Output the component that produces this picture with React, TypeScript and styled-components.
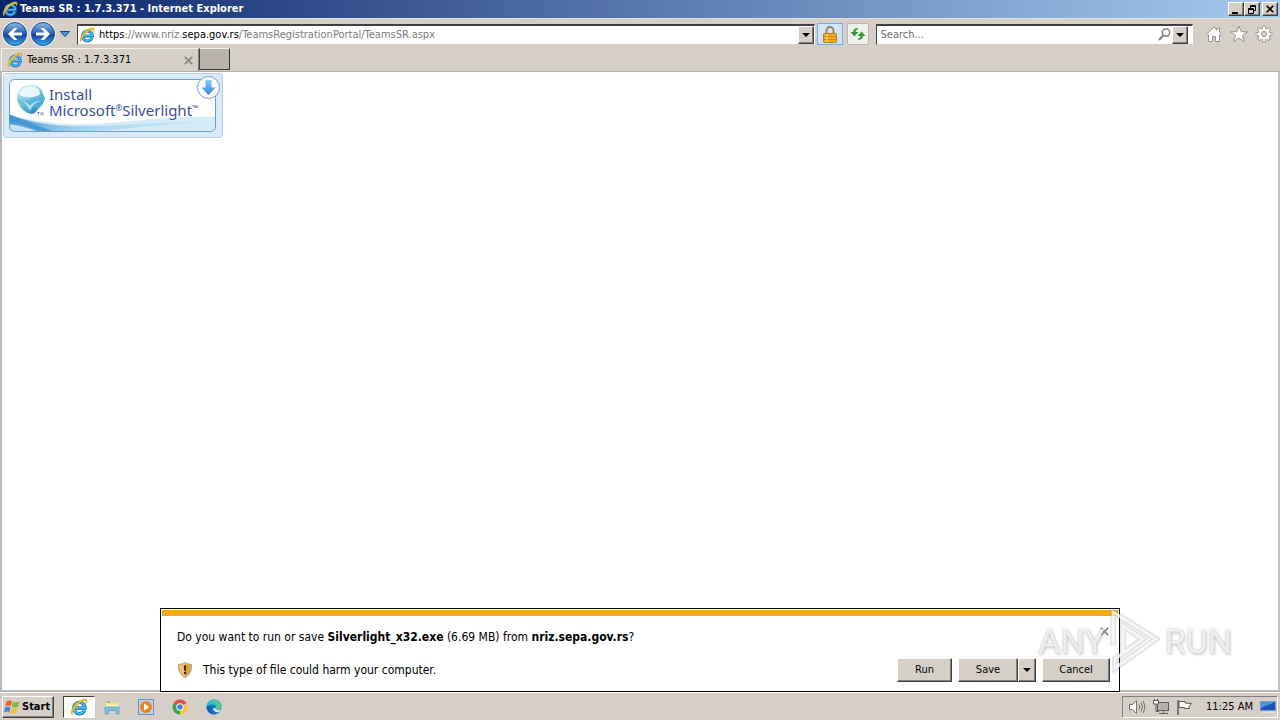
import React from "react";
import styled, { createGlobalStyle, css } from "styled-components";

const uiFont = `Tahoma, "DejaVu Sans Condensed", "DejaVu Sans", sans-serif`;
const face = "#d6cfc8";

const GlobalStyle = createGlobalStyle`
  * { box-sizing: border-box; }
  body { margin: 0; font: 11px/16px ${uiFont}; color: #000; background: ${face}; }
  button, input { font: inherit; color: inherit; }
  button { cursor: pointer; }
  svg { display: block; flex: none; }
`;

const raised = css`
  background: ${face};
  border: 1px solid;
  border-color: #fff #404040 #404040 #fff;
  box-shadow: inset -1px -1px 0 #808080;
`;

const Window = styled.div`
  position: relative;
  display: flex;
  flex-direction: column;
  min-height: 100vh;
`;

const TitleBar = styled.header`
  display: flex;
  align-items: center;
  gap: 2px;
  height: 18px;
  padding: 0 2px;
  color: #fff;
  background: linear-gradient(90deg, #0a246a, #a6caf0);
`;

const Title = styled.h1`
  flex: 1;
  margin: 0;
  font-size: 11px;
  line-height: 16px;
`;

const WindowButtons = styled.div`
  display: flex;
`;

const WindowButton = styled.button<{ $apart?: boolean }>`
  ${raised}
  display: grid;
  place-items: center;
  width: 16px;
  height: 14px;
  padding: 0;
  margin-left: ${(p) => (p.$apart ? "2px" : "0")};
`;

const NavBar = styled.nav`
  display: flex;
  align-items: center;
  height: 30px;
  padding: 1px 7px 0 1px;
  border-top: 1px solid #e4dfd8;
`;

const RoundButton = styled.button`
  display: grid;
  place-items: center;
  width: 28px;
  height: 28px;
  padding: 0;
  border: 0;
  background: none;
`;

const HistoryButton = styled(RoundButton)`
  width: 16px;
  margin-right: 4px;
`;

const Field = styled.div<{ $grow: number }>`
  display: flex;
  align-items: center;
  flex: ${(p) => p.$grow} 1 0;
  min-width: 0;
  height: 21px;
  padding-left: 1px;
  background: #fff;
  border: 1px solid;
  border-color: #404040 #fff #d6cfc8 #404040;
  border-top-width: 2px;
`;

const AddressText = styled.div`
  flex: 1;
  min-width: 0;
  margin-left: 4px;
  overflow: hidden;
  white-space: nowrap;
  color: #7b7b7b;
  outline: none;
`;

const Dark = styled.span`
  color: #000;
`;

const SearchInput = styled.input`
  flex: 1;
  min-width: 0;
  padding: 0 3px;
  border: 0;
  outline: 0;
  background: none;
  &::placeholder { color: #6d6d6d; opacity: 1; }
`;

const DropButton = styled.button`
  ${raised}
  display: grid;
  place-items: center;
  width: 16px;
  height: 18px;
  padding: 0;
`;

const SearchDrop = styled(DropButton)`
  margin-right: 4px;
`;

const LockButton = styled.button`
  display: grid;
  place-items: center;
  width: 26px;
  height: 22px;
  margin: 0 4px 0 2px;
  padding: 0;
  border: 1px solid #7eaee0;
  background: #cfe3fa;
`;

const RefreshButton = styled.button`
  display: grid;
  place-items: center;
  width: 22px;
  height: 22px;
  margin-right: 7px;
  padding: 0;
  border: 1px solid #b9b5ae;
  border-radius: 2px;
  background: #eef0ea;
`;

const Tools = styled.div`
  display: flex;
  gap: 7px;
  margin-left: 12px;
`;

const ToolButton = styled.button`
  width: 18px;
  height: 18px;
  padding: 0;
  border: 0;
  background: none;
`;

const TabRow = styled.div`
  display: flex;
  height: 23px;
  padding: 0 1px;
`;

const Tab = styled.div`
  display: flex;
  align-items: center;
  width: 198px;
  padding: 0 4px 0 5px;
  border: 1px solid #f4f1ec;
  border-bottom: 0;
  border-right: 1px solid #808080;
`;

const TabLabel = styled.span`
  flex: 1;
  margin-left: 4px;
`;

const CloseButton = styled.button`
  display: grid;
  place-items: center;
  width: 12px;
  height: 12px;
  padding: 0;
  border: 0;
  background: none;
`;

const NewTab = styled.button`
  width: 31px;
  height: 22px;
  padding: 0;
  background: #bab3ab;
  border: 1px solid;
  border-color: #f4f1ec #303030 #303030 #404040;
`;

const Page = styled.main`
  flex: 1;
  padding: 1px;
  background: #fff;
  border: 1px solid #a9a9a9;
  border-width: 1px 2px 2px 2px;
  border-color: #b1ada8 #c4c0bc #b9b9b9 #b9b6b3;
`;

const Badge = styled.a`
  position: relative;
  display: block;
  width: 220px;
  height: 65px;
  padding: 13px 0 0 46px;
  font: 15px/16px "Noto Sans", "Open Sans", sans-serif;
  color: #3a4fa0;
  text-decoration: none;
`;

const BadgeArt = styled.svg`
  position: absolute;
  inset: 0;
`;

const BadgeLine = styled.span`
  position: relative;
  display: flex;
  height: 16px;
`;

const Mark = styled.span`
  font-size: 8px;
  line-height: 12px;
`;

const Notice = styled.section`
  position: absolute;
  bottom: 28px;
  left: 12.5%;
  width: 75%;
  padding: 1px;
  background: #fff;
  border: 1px solid #000;
`;

const Stripe = styled.div`
  height: 6px;
  background: #f5ac06;
`;

const NoticeBody = styled.div`
  display: flex;
  flex-direction: column;
  gap: 9px;
  padding: 9px 8px 8px 15px;
  font-size: 12px;
`;

const NoticeRow = styled.div`
  display: flex;
  align-items: center;
  justify-content: space-between;
  min-height: 24px;
`;

const DismissButton = styled(CloseButton)`
  align-self: flex-start;
`;

const NoticeText = styled.p`
  display: flex;
  align-items: center;
  gap: 10px;
  margin: 0;
`;

const Actions = styled.div`
  display: flex;
  gap: 6px;
  font-size: 11px;
`;

const ActionButton = styled.button<{ $width: number }>`
  ${raised}
  display: grid;
  place-items: center;
  width: ${(p) => p.$width}px;
  height: 24px;
  padding: 0;
`;

const Split = styled.div`
  display: flex;
`;

const Watermark = styled.div`
  position: absolute;
  right: 48px;
  bottom: 46px;
  display: flex;
  align-items: center;
  gap: 5px;
  pointer-events: none;
  font: 34px/34px "Liberation Sans Narrow", "Roboto", sans-serif;
  color: rgba(255, 255, 255, 0.8);
  text-shadow: 0 0 2px rgba(120, 120, 120, 0.5), 1px 2px 3px rgba(120, 120, 120, 0.3);
`;

const Taskbar = styled.footer`
  display: flex;
  align-items: center;
  height: 28px;
  padding: 0 2px;
  border-top: 1px solid #fff;
`;

const StartButton = styled.button`
  ${raised}
  display: flex;
  align-items: center;
  gap: 1px;
  width: 52px;
  height: 22px;
  margin-right: 9px;
  padding: 0 1px;
  font-weight: bold;
`;

const TaskButton = styled.button<{ $active?: boolean }>`
  display: grid;
  place-items: center;
  width: ${(p) => (p.$active ? 32 : 34)}px;
  height: 22px;
  padding: 0;
  background: ${(p) => (p.$active ? "#fff" : "none")};
  border: ${(p) => (p.$active ? "1px solid" : "0")};
  border-color: #404040 #fff #fff #404040;
`;

const Tray = styled.div`
  display: flex;
  align-items: center;
  gap: 7px;
  height: 22px;
  margin-left: auto;
  padding: 0 1px 0 5px;
  border: 1px solid;
  border-color: #808080 #fff #fff #808080;
`;

const Clock = styled.time`
  margin-left: 6px;
`;

const IELogo = ({ size = 16 }: { size?: number }) => (
  <svg width={size} height={size} viewBox="0 0 16 16" fill="none">
    <path d="M13 10.900A5 5 0 1 1 13.400 8.900H4.200" stroke="#1c7cc4" strokeWidth="3" />
    <path d="M12.800 10.900A5 5 0 1 1 13.300 8.600H4.500" stroke="#58bdf0" strokeWidth="1.400" />
    <path d="M2.200 15C-.9 13.300 2.400 7.400 6.600 4 10.400.8 14.600-.2 15.200 2c.2 1-.3 2.200-1 3.200.3-1.600 0-2.700-1.600-2.500-2 .2-5 2.400-7.200 5.200-2.400 3-3.800 5.700-3.200 7.100Z" fill="#f2bf22" stroke="#c9941a" strokeWidth=".3" />
  </svg>
);

const Arrow = ({ flip }: { flip?: boolean }) => (
  <svg width="28" height="28" viewBox="0 0 28 28">
    <defs>
      <linearGradient id="orb" x1="0" y1="0" x2="0" y2="1">
        <stop offset="0" stopColor="#8fb8e6" />
        <stop offset=".45" stopColor="#2b66b8" />
        <stop offset=".55" stopColor="#12429a" />
        <stop offset="1" stopColor="#3fb4ee" />
      </linearGradient>
    </defs>
    <circle cx="14" cy="14" r="13" fill="#e9edf3" />
    <circle cx="14" cy="14" r="11.500" fill="url(#orb)" stroke="#1e4a8c" />
    <path d="M7 14l6-6h3.500L12.500 12.400H21v3.200h-8.500l4 4.400H13Z" fill="#fff" transform={flip ? "rotate(180 14 14)" : undefined} />
  </svg>
);

const Caret = () => (
  <svg width="8" height="4" viewBox="0 0 8 4">
    <path d="M0 0h8L4 4Z" fill="#000" />
  </svg>
);

const Cross = ({ color = "#8b8783", size = 9 }: { color?: string; size?: number }) => (
  <svg width={size} height={size} viewBox="0 0 8 8">
    <path d="M.7.7l6.600 6.600M7.300.7L.7 7.300" stroke={color} strokeWidth="1.600" />
  </svg>
);

const Silverlight = () => (
  <BadgeArt width="220" height="65" viewBox="0 0 220 65">
    <defs>
      <linearGradient id="wave" x1="0" y1="0" x2="1" y2="0">
        <stop offset="0" stopColor="#4ba0dc" />
        <stop offset=".35" stopColor="#a5d5f2" />
        <stop offset="1" stopColor="#d3ebf8" />
      </linearGradient>
      <linearGradient id="gem" x1="0" y1="0" x2=".6" y2="1">
        <stop offset="0" stopColor="#d5edf5" />
        <stop offset=".5" stopColor="#86cbe4" />
        <stop offset="1" stopColor="#2389c2" />
      </linearGradient>
      <linearGradient id="drop" x1="0" y1="0" x2="0" y2="1">
        <stop offset="0" stopColor="#9cc8f4" />
        <stop offset="1" stopColor="#2f7fe0" />
      </linearGradient>
      <clipPath id="panel"><rect x="7" y="7" width="205" height="51" rx="5" /></clipPath>
    </defs>
    <rect x=".5" y=".5" width="219" height="64" rx="2" fill="#d8e9f7" stroke="#b4d2ea" />
    <rect x="6.500" y="6.500" width="206" height="52" rx="5" fill="#fff" />
    <g clipPath="url(#panel)">
      <path d="M6 42c30 8 60 11 100 8s70-7 107-6v16H6Z" fill="#d5ebf8" />
      <path d="M6 41c22 9 44 12 74 12 50 0 80-6 133-3-55 0-90 7-140 9H6Z" fill="url(#wave)" />
      <path d="M6 43c16 4 30 10 46 16H38C26 54 16 50 6 49Z" fill="#398fd0" opacity=".7" />
      <path d="M6 51c12 2 20 4 30 8H6Z" fill="#c5e3f5" />
    </g>
    <rect x="6.500" y="6.500" width="206" height="52" rx="5" fill="none" stroke="#6d9fc6" />
    <path d="M18 15c6-4 15-4 20 1 2 3 2 6 4 9-1 5-5 9-7 11-2 3-4 5-7 5-6-1-13-8-14-14 0-5 1-9 4-12Z" fill="url(#gem)" />
    <path d="M16 21c1-5 6-8 12-8 5 0 9 3 9 8-4 4-17 5-21 0Z" fill="#eaf6fa" />
    <path d="M15 25c6 4 11 2 16 0 4-1 8-1 11-1-1 5-3 9-7 12-4-2-7-2-9 2-5-3-10-8-11-13Z" fill="#56b6da" opacity=".6" />
    <path d="M18 28c4 1 7 5 9 10 2-6 6-9 11-10-5 0-8 1-11 5-2-3-5-5-9-5Z" fill="#e4f5fa" opacity=".7" />
    <path d="M34 39.500h3M35.500 39.500v3M38 42.500v-3l1 1.500 1-1.500v3" stroke="#5978a8" strokeWidth=".7" fill="none" />
    <circle cx="205.500" cy="14.500" r="11" fill="#f8fbfe" stroke="#7d9fce" />
    <path d="M202.500 7h6v7.500h4l-7 7.500-7-7.500h4Z" fill="url(#drop)" />
  </BadgeArt>
);

export default function App() {
  return (
    <Window>
      <GlobalStyle />
      <TitleBar>
        <IELogo />
        <Title>Teams SR : 1.7.3.371 - Internet Explorer</Title>
        <WindowButtons>
          <WindowButton aria-label="Minimize">
            <svg width="10" height="9"><path d="M1 7h6v2H1Z" /></svg>
          </WindowButton>
          <WindowButton aria-label="Restore">
            <svg width="10" height="9" fill="none" stroke="#000"><path d="M3.500 3V.5h5v5H7M3 1.500h6M1.500 3.500h5v5h-5ZM1 4.500h6" /></svg>
          </WindowButton>
          <WindowButton aria-label="Close" $apart><Cross color="#000" size={8} /></WindowButton>
        </WindowButtons>
      </TitleBar>

      <NavBar>
        <RoundButton aria-label="Back"><Arrow /></RoundButton>
        <RoundButton aria-label="Forward"><Arrow flip /></RoundButton>
        <HistoryButton aria-label="Recent pages">
          <svg width="10" height="6"><path d="M.5.5h9L5 5.500Z" fill="#4b9bd8" stroke="#1b3f78" /></svg>
        </HistoryButton>
        <Field $grow={738}>
          <IELogo />
          <AddressText role="textbox" aria-label="Address" contentEditable suppressContentEditableWarning spellCheck={false}>
            <Dark>https</Dark>://www.nriz.<Dark>sepa.gov.rs</Dark>/TeamsRegistrationPortal/TeamsSR.aspx
          </AddressText>
          <DropButton aria-label="Show address list"><Caret /></DropButton>
        </Field>
        <LockButton aria-label="Security report">
          <svg width="14" height="17" viewBox="0 0 14 17">
            <path d="M3.500 8V4.500a3.500 3.500 0 0 1 7 0V8" fill="none" stroke="#9c8047" strokeWidth="1.800" />
            <rect x=".5" y="7.500" width="13" height="9" rx="1" fill="#efb01c" stroke="#b97d10" />
            <path d="M1 10.500h12M1 13.500h12" stroke="#c98a14" />
            <path d="M4 8v8" stroke="#fbdc7c" />
          </svg>
        </LockButton>
        <RefreshButton aria-label="Refresh">
          <svg width="16" height="14" viewBox="0 0 16 14" fill="#2d9a34">
            <path d="M8 1.500C5.500.8 3.200 2 3.200 5H.5L4.500 9.500 8.200 5H5.600C5.600 3.500 6.400 2.500 8 2.500Z" />
            <path d="M8 12.500c2.500.7 4.800-.5 4.800-3.500h2.700L11.500 4.500 7.800 9h2.600c0 1.500-.8 2.500-2.400 2.500Z" />
          </svg>
        </RefreshButton>
        <Field $grow={316}>
          <SearchInput type="search" aria-label="Search" placeholder="Search..." />
          <svg width="15" height="15" viewBox="0 0 15 15" fill="none" stroke="#858585">
            <circle cx="9" cy="5.500" r="3.700" strokeWidth="1.500" />
            <path d="M6.300 8.300L2 13" strokeWidth="2.200" />
          </svg>
          <SearchDrop aria-label="Search options"><Caret /></SearchDrop>
        </Field>
        <Tools>
          <ToolButton aria-label="Home">
            <svg width="18" height="18" viewBox="0 0 18 18">
              <path d="M1.500 9.500L9 2l3 3V3h2.500v4.500l2 2-1 1.200-1-.9v6.700h-4v-5h-3v5h-4V9.800l-1 .9Z" fill="#fff" stroke="#98938e" />
            </svg>
          </ToolButton>
          <ToolButton aria-label="Favorites">
            <svg width="18" height="18" viewBox="0 0 18 18">
              <path d="M9 1l2.200 5.600 6.200.2-4.900 3.700 1.800 6L9 13.100l-5.300 3.400 1.800-6L.6 6.800l6.200-.2Z" fill="#fff" stroke="#98938e" />
            </svg>
          </ToolButton>
          <ToolButton aria-label="Tools">
            <svg width="18" height="18" viewBox="0 0 18 18">
              {[0, 45, 90, 135].map((a) => (
                <rect key={a} x="7.500" y="1" width="3" height="16" rx="1" fill="#fff" stroke="#98938e" transform={`rotate(${a} 9 9)`} />
              ))}
              <circle cx="9" cy="9" r="5.500" fill="#fff" />
              <circle cx="9" cy="9" r="2.500" fill={face} stroke="#98938e" />
            </svg>
          </ToolButton>
        </Tools>
      </NavBar>

      <TabRow>
        <Tab>
          <IELogo />
          <TabLabel>Teams SR : 1.7.3.371</TabLabel>
          <CloseButton aria-label="Close tab"><Cross /></CloseButton>
        </Tab>
        <NewTab aria-label="New tab" />
      </TabRow>

      <Page>
        <Badge href="#install">
          <Silverlight />
          <BadgeLine>Install</BadgeLine>
          <BadgeLine>Microsoft<Mark>®</Mark>Silverlight<Mark>™</Mark></BadgeLine>
        </Badge>
      </Page>

      <Taskbar>
        <StartButton>
          <svg width="17" height="16" viewBox="0 0 17 16">
            <path d="M2.500 2.500C4.500 1 6 1.200 8 2.300L6.800 7.300C5 6.300 3.200 6.300 1.200 7.500Z" fill="#e8622a" />
            <path d="M9 2.800c2 1 4 1 6.500-.5l-1.400 5.200c-2 1.300-4.200 1.300-6.300.3Z" fill="#7db843" />
            <path d="M1 8.600c2-1.200 3.800-1.200 5.500-.2L5.300 13.400C3.700 12.300 2 12.400-.1 13.500Z" fill="#4089d0" />
            <path d="M7.500 9c2 1 4 1 6.200-.3l-1.300 5C10.300 15 8.200 15 6.200 14Z" fill="#f5c332" />
          </svg>
          Start
        </StartButton>
        <TaskButton $active aria-label="Internet Explorer"><IELogo size={18} /></TaskButton>
        <TaskButton aria-label="File Explorer">
          <svg width="16" height="16" viewBox="0 0 16 16">
            <path d="M1 2h5l1 1.500h7V13H1Z" fill="#e9cf72" />
            <path d="M2 4.500h12.500V9H2Z" fill="#f8edb4" />
            <path d="M3 3h3" stroke="#58a55c" />
            <path d="M1 8h14v7h-3v-3.500H4.500V15H1Z" fill="#79bfe0" stroke="#4f9cc6" strokeWidth=".6" />
          </svg>
        </TaskButton>
        <TaskButton aria-label="Media Player">
          <svg width="16" height="16" viewBox="0 0 16 16">
            <rect x=".5" y=".5" width="15" height="15" fill="#b9d5ee" stroke="#5f94c8" />
            <circle cx="8" cy="8" r="6" fill="#f08418" />
            <path d="M6 4.500L11.500 8 6 11.500Z" fill="#fff" />
          </svg>
        </TaskButton>
        <TaskButton aria-label="Chrome">
          <svg width="16" height="16" viewBox="0 0 16 16">
            <path d="M8 8L1.500 4.250A7.500 7.500 0 0 1 14.500 4.250Z" fill="#df4b3c" />
            <path d="M8 8L14.500 4.250A7.500 7.500 0 0 1 8 15.500Z" fill="#f7c62f" />
            <path d="M8 8v7.500A7.500 7.500 0 0 1 1.500 4.250Z" fill="#3c9f51" />
            <circle cx="8" cy="8" r="3.700" fill="#fff" />
            <circle cx="8" cy="8" r="2.800" fill="#4280e8" />
          </svg>
        </TaskButton>
        <TaskButton aria-label="Edge">
          <svg width="16" height="16" viewBox="0 0 16 16">
            <circle cx="8" cy="8" r="7.500" fill="#1673c5" />
            <path d="M.6 7.500C1.500 2.500 5 .5 8.300.5c4.200 0 7.200 3 7.200 6 0 2.600-2 4-4.200 4-1.500 0-2.300-.6-1.800-1.500.8-1.600-.3-3.600-2.700-3.600C4 5.400 1.600 6.500.6 7.500Z" fill="#35bfd0" />
            <path d="M8.300.5c4.200 0 7.200 3 7.200 6 0 2.600-2 4-4.200 4-1.500 0-2.300-.6-1.800-1.500C12 6 10 3 6 2Z" fill="#5fcf70" opacity=".7" />
            <path d="M9.500 9c-.5 1.500 2 2.500 5 1.200l.3.800-2 2.300C8.800 13.500 7 11.300 7.200 9.200Z" fill="#d9e7f2" />
            <path d="M5 7.500c-1.500 3 .5 7 4 7.800C4 16 .8 12 .6 7.500Z" fill="#154f9c" opacity=".6" />
          </svg>
        </TaskButton>
        <Tray>
          <svg width="18" height="16" viewBox="0 0 18 16" fill="none" stroke="#76726e">
            <path d="M1.500 5.500h3l4-4v13l-4-4h-3Z" fill="#fff" />
            <path d="M11 5.500q1.500 2.500 0 5M13 3.500q3 4.500 0 9M15 2q3.500 6 0 12" />
          </svg>
          <svg width="16" height="16" viewBox="0 0 16 16" fill="none" stroke="#5f5b58">
            <rect x="4.500" y="3.500" width="11" height="8" fill="#b5b2ae" stroke="#5f5b58" />
            <path d="M.5 1.500v3.500h5V1.500Z" fill="#fff" />
            <path d="M3 5v7.500h3M1.500 0v2M4.500 0v2M6 14.500h9M10.500 12v2" />
          </svg>
          <svg width="17" height="16" viewBox="0 0 17 16" stroke="#5f5b58">
            <path d="M2 1v15" strokeWidth="1.500" />
            <path d="M3 2.500h6v1.500l6.500.5-2.500 3 .5 2H8.500V8.500H3Z" fill="#fff" />
          </svg>
          <Clock>11:25 AM</Clock>
          <svg width="16" height="14" viewBox="0 0 16 14">
            <rect x=".5" y="1.500" width="15" height="9" fill="#1c55b4" stroke="#6f9fd0" />
            <path d="M1 2h14L1 8Z" fill="#4f93e0" />
            <path d="M2 12.500h12" stroke="#dce6ee" />
          </svg>
        </Tray>
      </Taskbar>

      <Notice aria-label="Download">
        <Stripe />
        <NoticeBody>
          <NoticeRow>
            <NoticeText>
              <span>Do you want to run or save <b>Silverlight_x32.exe</b> (6.69 MB) from <b>nriz.sepa.gov.rs</b>?</span>
            </NoticeText>
            <DismissButton aria-label="Dismiss"><Cross /></DismissButton>
          </NoticeRow>
          <NoticeRow>
            <NoticeText>
              <svg width="16" height="16" viewBox="0 0 16 16">
                <path d="M8 .5C10 2 12.500 2.300 14.500 2.300c.5 6-1.500 10.700-6.500 13.200C3 13 1 8.300 1.500 2.300 3.500 2.300 6 2 8 .5Z" fill="#eec06f" stroke="#a79a8b" />
                <path d="M8 1.500c1.500 1 3.500 1.700 5.500 1.800.2 5-1.500 9-5.500 11Z" fill="#dc9a36" />
                <path d="M6.800 3.500h2.400L8.700 9H7.300Z" fill="#3a2314" />
                <circle cx="8" cy="11" r="1.200" fill="#3a2314" />
              </svg>
              This type of file could harm your computer.
            </NoticeText>
            <Actions>
              <ActionButton $width={55}>Run</ActionButton>
              <Split>
                <ActionButton $width={60}>Save</ActionButton>
                <ActionButton $width={18} aria-label="Save options"><Caret /></ActionButton>
              </Split>
              <ActionButton $width={68}>Cancel</ActionButton>
            </Actions>
          </NoticeRow>
        </NoticeBody>
      </Notice>

      <Watermark>
        <span>ANY</span>
        <svg width="50" height="66" viewBox="0 0 50 66" fill="none">
          <path d="M3 38V4l43 27L5 60V51l28-20L13 18v26" stroke="rgba(120,120,120,.12)" strokeWidth="7" />
          <path d="M3 38V4l43 27L5 60V51l28-20L13 18v26" stroke="rgba(120,120,120,.14)" strokeWidth="5" />
          <path d="M3 38V4l43 27L5 60V51l28-20L13 18v26" stroke="rgba(255,255,255,.75)" strokeWidth="3" />
        </svg>
        <span>RUN</span>
      </Watermark>
    </Window>
  );
}
